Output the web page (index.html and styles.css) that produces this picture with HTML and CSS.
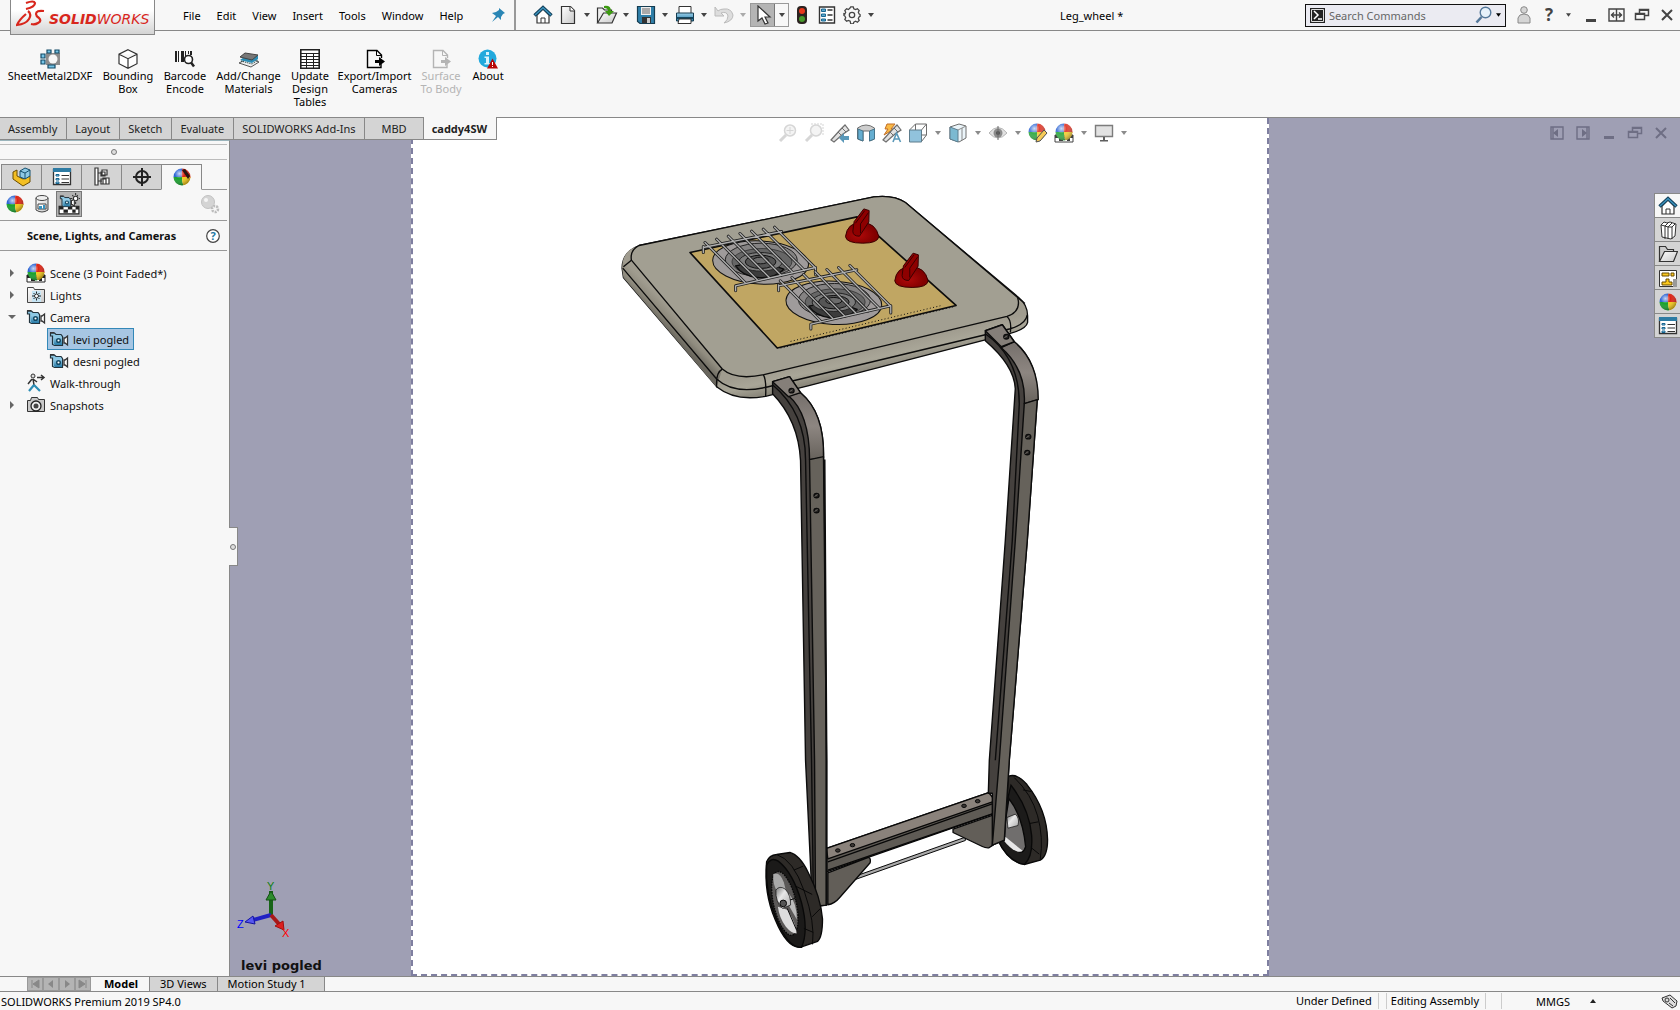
FILE: index.html
```html
<!DOCTYPE html>
<html lang="en">
<head>
<meta charset="utf-8">
<title>Leg_wheel * - SOLIDWORKS Premium 2019</title>
<link rel="stylesheet" href="styles.css">
</head>
<body>
<svg class="defs" width="0" height="0" aria-hidden="true">
  <defs>
    <radialGradient id="shine" cx=".35" cy=".3" r=".75"><stop offset="0" stop-color="#fff" stop-opacity=".75"/><stop offset=".4" stop-color="#fff" stop-opacity="0"/><stop offset="1" stop-color="#000" stop-opacity=".4"/></radialGradient>
    <linearGradient id="blue" x1="0" y1="0" x2="0" y2="1"><stop offset="0" stop-color="#9bd0ea"/><stop offset="1" stop-color="#2579a5"/></linearGradient>
    <linearGradient id="paper" x1="0" y1="0" x2="1" y2="1"><stop offset="0" stop-color="#fff"/><stop offset="1" stop-color="#c8c8c8"/></linearGradient>
    <clipPath id="ballclip"><circle cx="10" cy="10" r="8.500"/></clipPath>
  </defs>
  <symbol id="ball" viewBox="0 0 20 20"><g clip-path="url(#ballclip)"><path fill="#2a63d4" d="M0 0h11q-2 5-1 10H0z"/><path fill="#dc2414" d="M11 0h9v11H10q-1-6 1-11z"/><path fill="#18a02c" d="M0 10h10q0 6 2 10H0z"/><path fill="#f5c915" d="M10 10h10v10h-8q-2-4-2-10z"/><circle cx="10" cy="10" r="8.500" fill="url(#shine)"/></g></symbol>
  <symbol id="house" viewBox="0 0 20 20"><path d="M4 10v8h12v-8l-6-6z" fill="#fff" stroke="#333" stroke-width="1.2"/><path d="M8 18v-5h4v5" fill="none" stroke="#333"/><path d="M1.500 10.500 10 2.500l8.500 8" fill="none" stroke="#123f5a" stroke-width="3.400"/><path d="M2 10 10 2.700 18 10" fill="none" stroke="#3b93bd" stroke-width="1.400"/></symbol>
  <symbol id="list" viewBox="0 0 20 20"><path d="M1.500 2.500h17v15h-17z" fill="#fff" stroke="#333" stroke-width="1.300"/><path d="M1 1h18v4H1z" fill="#2d7ba3"/><path d="M4 7.500h3v1.500H4zm0 4h3v1.500H4zm0 3.500h3v1.500H4z" fill="#9bd0ea" stroke="#176490"/><path d="M9.500 8.500H17M9.500 12H17m-7.500 3.500H17" stroke="#333" stroke-width="1.200"/></symbol>
  <symbol id="camera" viewBox="0 0 20 20"><path d="M1.500 4v3h2v8.500l2 1h8V7.500l-1.500-2H7L5.500 4z" fill="#8cc8e4" stroke="#22333d" stroke-width="1.200"/><path d="M5 8h8v8H6l-1-1z" fill="url(#blue)"/><path d="M1 3h4l1 1.500H1z" fill="#333"/><circle cx="9.500" cy="11.500" r="1.800" fill="#fff" stroke="#134a66" stroke-width="1.500"/><path d="M15 9h1l2.500-2v9L16 14h-1z" fill="#fff" stroke="#333" stroke-width="1.300"/></symbol>
  <symbol id="checker" viewBox="0 0 20 20"><path d="M1 12h18v7H1z" fill="#fff" stroke="#222"/><path d="M1 12h4v3H1zm8 0h4v3H9zm7 0h3v3h-3zM5 15h4v3H5zm8 0h3v3h-3z" fill="#222"/></symbol>
  <symbol id="scene" viewBox="0 0 20 20"><use href="#checker"/><use href="#ball" y="-1"/></symbol>
  <symbol id="loupe" viewBox="0 0 20 20"><circle cx="12" cy="7.500" r="5.500" fill="#eee" stroke="currentColor" stroke-width="1.500"/><path d="m8 12-6 6" stroke="currentColor" stroke-width="3"/></symbol>
  <symbol id="caret" viewBox="0 0 6 4"><path d="M0 0h6L3 4z" fill="currentColor"/></symbol>
  <symbol id="exportdoc" viewBox="0 0 20 20"><path d="M11 18.500H2.500v-17h9.500l4.500 4.500v3M16 15v3.500h-5" fill="none" stroke="currentColor" stroke-width="1.400"/><path d="M11.500 1.500v5h5" fill="none" stroke="currentColor"/><path d="M10 11h4V8l6 4.500-6 4.500v-3h-4z" fill="currentColor"/></symbol>
  <symbol id="restore" viewBox="0 0 16 16"><path d="M5.500 6V2.500h9v6H11M1.500 6.500h9v6h-9z" fill="none" stroke="currentColor" stroke-width="1.500"/><path d="M5 2h10v2H5zM1 6h10v2H1z" fill="currentColor"/></symbol>
  <symbol id="cross" viewBox="0 0 16 16"><path d="m3 3 10 10M13 3 3 13" stroke="currentColor" stroke-width="2"/></symbol>
  <symbol id="tele" viewBox="0 0 20 20"><path d="m1 17 9-10 5-5 4 5-6 4L4 19z" fill="#ddd" stroke="#555" stroke-width="1.200"/><path d="m8 9 4 4m0-8 4 4" stroke="#555"/></symbol>
</svg>

<header class="titlebar">
  <div class="logo">
    <svg width="29" height="28" viewBox="0 0 29 28" fill="none" stroke="#d8261c" stroke-width="2.200"><path d="M10 3q8-3 9 0 0 4-9 6M12 11q4 3 1 8-3 5-12 6 2-5 9-11M28 11q-8-1-8 3 0 2 3 4 3 3-1 5-3 2-7 1"/></svg>
    <span class="wordmark"><b>SOLID</b>WORKS</span>
  </div>
  <nav class="menu">
    <button>File</button><button>Edit</button><button>View</button><button>Insert</button><button>Tools</button><button>Window</button><button>Help</button>
  </nav>
  <button class="pin" aria-label="Pin menu"><svg width="14" height="14" viewBox="0 0 14 14"><path d="m8 0 6 5-2 1-2 3v3L7 9l-6 5 4-6-4-3 4-1 3-2z" fill="#2a86b5"/></svg></button>
  <div class="quick">
    <button class="ico" aria-label="Home"><svg width="20" height="20"><use href="#house"/></svg></button>
    <button class="ico" aria-label="New"><svg width="20" height="20" viewBox="0 0 20 20"><path d="M3.500 1.500h9l4 4v13h-13z" fill="url(#paper)" stroke="#333" stroke-width="1.200"/><path d="M12 1.500V6h4.500" fill="#fff" stroke="#333"/></svg></button><button class="drop" aria-label="New options"><svg width="6" height="4"><use href="#caret"/></svg></button>
    <button class="ico" aria-label="Open"><svg width="22" height="20" viewBox="0 0 22 20"><path d="M1.500 18V3h5l2 2h7v4" fill="#eee" stroke="#333" stroke-width="1.200"/><path d="m1.500 18 6-10h13l-4.500 10z" fill="url(#paper)" stroke="#333" stroke-width="1.200"/><path d="M8 1q7-1 7 5h3l-5 5-4-5h3q0-3-4-3z" fill="#3c9a11"/></svg></button><button class="drop" aria-label="Open options"><svg width="6" height="4"><use href="#caret"/></svg></button>
    <button class="ico" aria-label="Save"><svg width="20" height="20" viewBox="0 0 20 20"><path d="M1.500 1.500h17v17H4l-2.500-2z" fill="#2f7fa9" stroke="#163c50" stroke-width="1.200"/><path d="M5 2h10v8H5z" fill="#eee"/><path d="M6 4h8M6 6h8M6 8h8" stroke="#666"/><path d="M6 12h9v6H6z" fill="#333"/><path d="M11 13h3v5h-3z" fill="#ccc"/></svg></button><button class="drop" aria-label="Save options"><svg width="6" height="4"><use href="#caret"/></svg></button>
    <button class="ico" aria-label="Print"><svg width="20" height="20" viewBox="0 0 20 20"><path d="M4 9V1.500h12V9" fill="#fff" stroke="#333"/><path d="M1.500 8h17v8h-17z" fill="url(#blue)" stroke="#163c50"/><path d="M1 12h18v2H1z" fill="#15465f"/><path d="M4 14h12v4.500H3z" fill="#fff" stroke="#333"/></svg></button><button class="drop" aria-label="Print options"><svg width="6" height="4"><use href="#caret"/></svg></button>
    <button class="ico" aria-label="Undo" disabled><svg width="20" height="20" viewBox="0 0 20 20"><path d="M1 2v9h9L7 8q6-2 7 3 0 4-4 7 9-2 9-8Q17 3 10 4q-4 0-6 2z" fill="#ddd" stroke="#bbb"/></svg></button><button class="drop" aria-label="Undo options" disabled><svg width="6" height="4"><use href="#caret"/></svg></button>
    <span class="select"><button class="ico" aria-label="Select"><svg width="20" height="20" viewBox="0 0 20 20"><path d="M5 1v15l4-3 3 6 3-1-3-6h5z" fill="#fff" stroke="#333" stroke-width="1.200"/></svg></button><button class="drop" aria-label="Select options"><svg width="6" height="4"><use href="#caret"/></svg></button></span>
    <button class="ico" aria-label="Rebuild"><svg width="20" height="20" viewBox="0 0 20 20"><rect x="5" y="1" width="10" height="18" rx="4" fill="#2b2220"/><circle cx="10" cy="6" r="3" fill="#e8381c"/><circle cx="10" cy="14" r="3" fill="#479a2a"/></svg></button>
    <button class="ico" aria-label="File properties"><svg width="18" height="20" viewBox="0 0 18 20"><path d="M1.500 2h15v16h-15z" fill="#fff" stroke="#333" stroke-width="1.400"/><path d="M3.500 4h4v2.500h-4zm0 5h4v2.500h-4zm0 5h4v2h-4z" fill="#5ba9cd" stroke="#176490"/><path d="M9.500 5h5m-5 5h5m-5 5h5" stroke="#333" stroke-width="1.400"/></svg></button>
    <button class="ico" aria-label="Options"><svg width="18" height="18" viewBox="0 0 20 20" fill="none" stroke="#444" stroke-width="1.400"><path d="m8 2 .6-1h2.800l.6 2 2 1 2-1 2 2-1 2 1 2 1 .500v2l-1 .500-1 2 1 2-2 2-2-1-2 1-.600 2H8.600L8 17l-2-1-2 1-2-2 1-2-1-2-1-.500v-2L2 9l1-2-1-2 2-2 2 1z"/><circle cx="10" cy="10" r="3"/></svg></button><button class="drop" aria-label="Options list"><svg width="6" height="4"><use href="#caret"/></svg></button>
  </div>
  <h1 class="doc">Leg_wheel *</h1>
  <label class="search">
    <svg width="15" height="15" viewBox="0 0 15 15"><path d="M0 0h15v15H0z" fill="#222"/><path d="M1.500 1.500h12v12h-12z" fill="none" stroke="#ddd"/><path d="m4 3 4 4-4 4m4 0h4" stroke="#fff" stroke-width="1.500" fill="none"/></svg>
    <input type="text" placeholder="Search Commands" aria-label="Search Commands">
    <svg width="17" height="18" viewBox="0 0 17 18"><circle cx="10.500" cy="6.500" r="5.300" fill="#e6f1fa" stroke="#54789a" stroke-width="1.400"/><path d="m6.500 11-5 5.500" stroke="#54789a" stroke-width="2.600"/></svg>
    <svg width="5" height="4"><use href="#caret"/></svg>
  </label>
  <div class="window">
    <button aria-label="User"><svg width="14" height="18" viewBox="0 0 14 18" fill="#d5d5d5" stroke="#888"><circle cx="7" cy="4" r="3.300"/><path d="M1 17v-5q1-4 6-4t6 4v5z"/></svg></button>
    <button class="help" aria-label="Help">?</button>
    <button class="drop" aria-label="Help options"><svg width="5" height="4"><use href="#caret"/></svg></button>
    <button aria-label="Minimize"><svg width="16" height="16"><path d="M3 12h10v3H3z" fill="#444"/></svg></button>
    <button aria-label="Span displays"><svg width="17" height="16" viewBox="0 0 17 16" fill="none" stroke="#444" stroke-width="1.400"><path d="M1 2h15v12H1zM8.500 2v12M3 8h11M6 5.500 3.500 8 6 10.500M11 5.500 13.500 8 11 10.500"/></svg></button>
    <button aria-label="Restore"><svg width="16" height="16"><use href="#restore"/></svg></button>
    <button aria-label="Close"><svg width="16" height="16"><use href="#cross"/></svg></button>
  </div>
</header>

<section class="ribbon" aria-label="caddy4SW commands">
  <button class="w84"><svg width="20" height="20" viewBox="0 0 20 20"><path d="M6 4h14v12H6z" fill="#8c8c8c"/><circle cx="13" cy="10" r="4.500" fill="#f7f7f7"/><path d="M1 5h4v4H1zm0 6h4v4H1zM7 1h4v3H7zm8 0h4v3h-4zM8 16h7v3H8z" fill="#76c4e6" stroke="#134a66" stroke-width="1.200"/></svg>SheetMetal2DXF</button>
  <button class="w52"><svg width="20" height="20" viewBox="0 0 20 20" fill="#fff" stroke="#333" stroke-width="1.200"><path d="m10 .700 9 4.500v9.500l-9 4.600-9-4.600V5.200zM1 5.200l9 4.500 9-4.500M10 9.700v9.600"/></svg>Bounding<br>Box</button>
  <button class="w42"><svg width="20" height="20" viewBox="0 0 20 20"><path d="M0 2h2v11H0zm3 0h1v11H3zm3 0h3v11H6zm4 0h1v5h-1zm3 0h1v3h-1zm2 0h2v4h-2z" fill="#222"/><circle cx="13.500" cy="10.500" r="4" fill="#fff" stroke="#222" stroke-width="1.600"/><path d="m16 13.500 3 4" stroke="#222" stroke-width="2.500"/></svg>Barcode<br>Encode</button>
  <button class="w65"><svg width="20" height="20" viewBox="0 0 20 20"><path d="m0 14 12 4 8-5-10-4z" fill="#eee" stroke="#555"/><path d="m1 11 12 3 6-4V7L8 6z" fill="#2c8db5"/><path d="m2 12 11 3 6-4" stroke="#133" fill="none" stroke-dasharray="1 1"/><path d="m1 8 5-4 13 2-6 5z" fill="#777" stroke="#444"/></svg>Add/Change<br>Materials</button>
  <button class="w38"><svg width="20" height="20" viewBox="0 0 20 20" fill="#fff" stroke="#222"><path stroke-width="1.600" d="M.800.800h18.400v18.400H.800z"/><path d="M1 4.500h18M1 7.500h18M1 10.500h18M1 13.500h18M1 16.500h18M6.500 4v15m7-15v15"/></svg>Update<br>Design<br>Tables</button>
  <button class="w71"><svg width="20" height="20"><use href="#exportdoc"/></svg>Export/Import<br>Cameras</button>
  <button class="w42" disabled><svg width="20" height="20"><use href="#exportdoc"/></svg>Surface<br>To Body</button>
  <button class="w32"><svg width="20" height="20" viewBox="0 0 20 20"><circle cx="9.500" cy="9.500" r="9" fill="#22a9dd"/><path d="M8 3h3v3H8zM6.500 7.500H11V14h1.500v1.500h-6V14H8V9H6.500z" fill="#d9f3fd"/><path d="m14.500 9.500 5.500 10H9z" fill="#b80707"/><path d="M14 13h1v3h-1zm0 4h1v1h-1z" fill="#fff"/></svg>About</button>
</section>

<main class="work">
  <section class="canvas" aria-label="Graphics area">
    <div class="frame">
      <svg class="model" viewBox="412 118 855 855" role="img" aria-label="Cooking cart assembly">
        <defs>
          <linearGradient id="rim" gradientUnits="userSpaceOnUse" x1="790" y1="500" x2="810" y2="590"><stop offset="0" stop-color="#a09c8f"/><stop offset=".35" stop-color="#a9a698"/><stop offset="1" stop-color="#747065"/></linearGradient>
          <linearGradient id="rimL" gradientUnits="userSpaceOnUse" x1="200" y1="400" x2="160" y2="440"><stop offset="0" stop-color="#a09c8f"/><stop offset=".5" stop-color="#8f8b7e"/><stop offset="1" stop-color="#69665d"/></linearGradient>
          <linearGradient id="bend" x1="0" y1="0" x2="0" y2="1"><stop offset="0" stop-color="#756f6b"/><stop offset=".5" stop-color="#8d8681"/><stop offset="1" stop-color="#67625c"/></linearGradient>
          <linearGradient id="steel" x1="0" y1="0" x2="1" y2="1"><stop offset="0" stop-color="#777"/><stop offset=".4" stop-color="#e8e8e8"/><stop offset="1" stop-color="#aaa"/></linearGradient>
          <radialGradient id="red" cx=".4" cy=".6"><stop offset="0" stop-color="#b00a0a"/><stop offset="1" stop-color="#820000"/></radialGradient>
          <g id="hob">
            <ellipse cx="0" cy="0" rx="144" ry="65" fill="#9f9b9b" stroke="#111" stroke-width="3" transform="rotate(3)"/>
            <ellipse cx="2" cy="-8" rx="108" ry="50" fill="#858383" stroke="#222" stroke-width="3"/>
            <ellipse cx="4" cy="-2" rx="90" ry="40" fill="#666" stroke="#222" stroke-width="2"/>
            <path d="m-75 10 75-15 70 25q-30 30-80 25-45-5-65-35z" fill="#3c3c3c"/>
            <ellipse cx="0" cy="-2" rx="65" ry="28" fill="#7c7c7c" stroke="#222" stroke-width="3"/>
            <ellipse cx="0" cy="-2" rx="46" ry="20" fill="#555" stroke="#111" stroke-width="3"/>
            <ellipse cx="0" cy="-6" rx="24" ry="10" fill="#6b6b6b" stroke="#111" stroke-width="3"/>
          </g>
          <path id="bars" d="M-172-48v18M-172-45l235-48M-75 85V70l240-55v22M-167-60-47 60M-132-70l122 122M-97-79 27 46M-62-87 62 39M-27-94 97 31M8-100 132 24M42-106 165 17"/>
          <g id="grate" fill="none" stroke-linecap="round"><use href="#bars" stroke="#202020" stroke-width="9"/><use href="#bars" stroke="#b0b0b0" stroke-width="4"/></g>
          <g id="knob" stroke="#3a0000" stroke-width="3"><path d="M-50 10q5-42 48-42t52 42q-2 20-48 20-50 0-52-20z" fill="url(#red)"/><path d="m-24-35 29-38 16 5-1 34-28 43q-20 0-20-15z" fill="#8e0000"/><path d="m-20-30 28-38M-5-28l24-34M-5-28v28" fill="none"/></g>
          <g id="hole"><ellipse rx="2.500" ry="2.200" fill="#2a2826"/><path d="m-2 1 3-2" stroke="#6d6964" stroke-width="1"/></g>
        </defs>
        <!-- right wheel -->
        <g transform="translate(740 760) scale(.33333)" stroke="#080808" stroke-width="4">
          <path d="M805 48q25-10 55 25 60 75 62 165 0 50-22 62l-48 13q-50-8-80-75z" fill="#2d2a27"/>
          <path d="M812 75q55 70 62 150 5 65-22 88-50-10-80-75z" fill="#1c1b1a"/>
          <path d="M822 52q52 50 70 115t8 130M868 190l26-5m-46-96 24 5M872 262l25 20" fill="none" stroke-width="3"/>
          <path d="M806 115q42 55 50 145-8 25-25 12-30-20-42-50z" fill="#706e6d"/>
          <path d="m795 230 52 42q-10 8-30-5-20-14-27-28z" fill="#e8e8e8" stroke="none"/>
          <path d="m800 172 25-10q14 12 8 34l-30 8z" fill="url(#steel)" stroke-width="2"/>
        </g>
        <!-- axle, crossbar and gussets -->
        <g transform="translate(740 760) scale(.33333)" stroke="#080808" stroke-width="4" stroke-linejoin="round">
          <path d="m345 348 330-117v10L345 358z" fill="#aaa" stroke-width="3"/>
          <path d="m258 265 487-168 20 27v35L258 335z" fill="#5f5b55"/>
          <path d="m258 265 487-168 20 25L262 296z" fill="#8a827b"/>
          <path d="m262 305 500-176M262 330l500-171" fill="none"/>
          <path d="m262 338 122-46q8 2 5 16l-92 105q-15 18-35 21z" fill="#625e58"/>
          <path d="m638 207 120-42v90l-12 8q-10 1-20-4l-88-42z" fill="#625e58"/>
          <g fill="#3a3633" stroke-width="3"><ellipse cx="292" cy="271" rx="7" ry="5"/><ellipse cx="336" cy="255" rx="7" ry="5"/><ellipse cx="671" cy="137" rx="7" ry="5"/><ellipse cx="712" cy="123" rx="7" ry="5"/></g>
        </g>
        <!-- table top -->
        <g transform="translate(610 180) scale(.33333)" stroke="#0c0c0c" stroke-width="4" stroke-linejoin="round">
          <path d="M34 262Q34 214 85 194L790 48q60-7 95 17l340 285q27 22 27 55v20q-4 20-52 33L595 615l-130 32q-92 16-145-27L38 290z" fill="url(#rim)"/>
          <path d="M34 262q0-48 41-64-20 15-13 42l273 325-17 55L38 290z" fill="url(#rimL)" stroke="none"/>
          <path d="M62 238q-5-30 23-44L790 48q60-7 95 17l337 285q12 42-32 57L460 582q-85 18-125-17z" fill="#a29f92"/>
          <path d="M36 262q5 5 282 333 52 48 152 24l730-175q46-14 51-42M335 565q-20 10-17 55M458 582q10 15 7 65M62 238l-24 20M1190 407q15 12 10 48M1222 350l22 18" fill="none"/>
          <path d="m238 215 502-107 297 266-537 128z" fill="#c0a663" stroke-width="5"/>
          <path d="m540 482 450-107M510 502l520-124" fill="none" stroke-width="3" stroke-dasharray="3 7"/>
          <use href="#hob" x="450" y="245"/><use href="#grate" x="450" y="245"/>
          <use href="#hob" x="670" y="366"/><use href="#grate" x="676" y="360"/>
          <use href="#knob" x="755" y="157"/><use href="#knob" x="903" y="290"/>
        </g>
        <!-- right leg -->
        <g stroke="#0c0c0c" stroke-width="1.400" stroke-linejoin="round">
          <path d="M985 330 1002 324 1014 341Q1038 361 1037 399L1027 540 1009 760 1004 840 992 845V793L988 793 989 760 1005 540 1015 388Q1014 365 985 340z" fill="#45413e"/>
          <path d="m1014 341q24 20 24 58l-14 4q2-34-23-56z" fill="url(#bend)"/>
          <path d="m985 330 17-6 12 17-13 5z" fill="#857f79"/>
          <path d="M1024 403 1037 399 1027 540 1009 760 1004 840 992 845 999 760 1015 540z" fill="#66625b"/>
          <path d="M985 333Q1019 357 1019 403L1012 540 995 760" fill="none"/>
          <use href="#hole" x="1006" y="336"/><use href="#hole" x="1028" y="436"/><use href="#hole" x="1027" y="452"/>
        </g>
        <!-- left leg -->
        <g stroke="#0c0c0c" stroke-width="1.400" stroke-linejoin="round">
          <path d="M772 381 789 376 800 392Q824 412 823 457L826 905 812 907 805 760 800 460Q798 420 772 393z" fill="#45413e"/>
          <path d="m800 392q24 20 23 65l-14 2q0-46-21-64z" fill="url(#bend)"/>
          <path d="m772 381 17-5 11 16-12 4z" fill="#857f79"/>
          <path d="M809 459 823 456 826 760V905L815 906 814 760z" fill="#66625b"/>
          <path d="M772 384Q805 412 805 459L811 760 813 906" fill="none"/>
          <path d="M824 459 826 760V905" fill="none" stroke-width="2"/>
          <use href="#hole" x="791" y="390"/><use href="#hole" x="816" y="495"/><use href="#hole" x="816" y="510"/>
        </g>
        <!-- left wheel -->
        <g transform="translate(740 760) scale(.33333)" stroke="#080808" stroke-width="4">
          <path d="M78 305q8-20 30-22l40-6q30 8 55 60 38 75 43 140 0 55-15 67l-52 18q-40 2-75-83-35-80-26-174z" fill="#2d2a27"/>
          <path d="M78 315q12-26 35-12 45 35 70 125 22 85 0 134-40 2-75-83-35-80-30-164z" fill="#1b1a19"/>
          <path d="M108 283q50 15 83 110t25 160M160 330l28-12M165 378l50 25M215 470l25-25M190 505l28 12" fill="none" stroke-width="3"/>
          <ellipse cx="133" cy="430" rx="34" ry="98" transform="rotate(-13 133 430)" fill="#5b5958" stroke-dasharray="5 3"/>
          <path d="M98 342q20-8 32 25l8 33-28-5q-14-22-12-53z" fill="#aaa" stroke="none"/>
          <path d="m112 440 30 10q28 50 26 70-16 0-32-20-20-26-24-60z" fill="#ddd" stroke="none"/>
          <path d="m145 400q24 30 24 78l-22-38z" fill="#bbb" stroke="none"/>
          <path d="m106 390q10-15 28-3 18 20 16 48l-24 10q-22-20-20-55z" fill="url(#steel)" stroke-width="2"/>
          <circle cx="128" cy="430" r="10" fill="#555" stroke-width="3"/><path d="m140 445 28 65m-20-90 15-5" stroke-width="3"/>
        </g>
      </svg>
    </div>
  </section>

  <nav class="tabs" aria-label="CommandManager">
    <button>Assembly</button><button>Layout</button><button>Sketch</button><button>Evaluate</button><button>SOLIDWORKS Add-Ins</button><button class="wide">MBD</button><button class="on">caddy4SW</button>
  </nav>

  <aside class="panel">
    <div class="grip"><i class="dot"></i></div>
    <div class="ptabs">
      <button aria-label="FeatureManager"><svg width="20" height="20" viewBox="0 0 20 20"><path d="m1 5 4-2v6l6 3 7-3v6l-7 4-10-7z" fill="#f3bf24" stroke="#6b4d00"/><path d="m8 4 5-3 5 2v6l-5 3-5-2z" fill="#8fc9e6" stroke="#15506e"/><path d="m8 4 5 2 5-3M13 6v6" stroke="#15506e" fill="none"/></svg></button>
      <button aria-label="PropertyManager"><svg width="20" height="20"><use href="#list"/></svg></button>
      <button aria-label="ConfigurationManager"><svg width="20" height="20" viewBox="0 0 20 20" fill="#fff" stroke="#333" stroke-width="1.200"><path d="M3 1h3v17H3zM6 6h4M6 14h4M10 3h5v5h-5zM11 11h6v6h-6zM9 5h4v4H9zM9 12h5v5H9z"/></svg></button>
      <button aria-label="DimXpertManager"><svg width="20" height="20" viewBox="0 0 20 20" fill="none" stroke="#222" stroke-width="2"><circle cx="10" cy="10" r="6"/><path d="M10 1v18M1 10h18"/></svg></button>
      <button class="on" aria-label="DisplayManager"><svg width="20" height="20" viewBox="0 0 20 20"><use href="#ball"/><path d="m10 3 3-1 5 7-2 3z" fill="#2a1512"/></svg></button>
    </div>
    <div class="ptools">
      <button aria-label="View appearances"><svg width="20" height="20"><use href="#ball"/></svg></button>
      <button aria-label="View decals"><svg width="20" height="20" viewBox="0 0 20 20"><path d="M4 4v12q6 4 12 0V4z" fill="url(#paper)" stroke="#444"/><ellipse cx="10" cy="4" rx="6" ry="2.500" fill="#eee" stroke="#444"/><path d="M6 10h8v5H6z" fill="#fff" stroke="#444"/><path d="M7 12h3v3H7zm4-1h2v4h-2z" fill="#3892be"/></svg></button>
      <button class="on" aria-label="View scene, lights and cameras"><svg width="22" height="22" viewBox="0 0 20 20"><use href="#checker"/><use href="#camera" x="1" y="-1" width="15" height="17"/><circle cx="16" cy="5" r="2" fill="#fff" stroke="#333"/><path d="M16 0v2m0 6v2m-5-5h2m6 0h1M13 2l1 1m4-1-1 1" stroke="#333"/></svg></button>
      <button class="end" aria-label="Settings" disabled><svg width="20" height="20" viewBox="0 0 20 20"><circle cx="8" cy="8" r="6.500" fill="#d4d4d4" stroke="#c2c2c2"/><circle cx="6" cy="6" r="2" fill="#f5f5f5"/><circle cx="15" cy="15" r="3" fill="none" stroke="#bbb" stroke-width="2.500" stroke-dasharray="2 1"/></svg></button>
    </div>
    <div class="ptitle"><h2>Scene, Lights, and Cameras</h2><button aria-label="Help"><svg width="14" height="14" viewBox="0 0 14 14"><circle cx="7" cy="7" r="6.300" fill="#fff" stroke="#444" stroke-width="1.200"/><text x="7" y="11" class="q" text-anchor="middle">?</text></svg></button></div>
    <ul class="tree">
      <li><i class="arrow"></i><svg width="20" height="20"><use href="#scene"/></svg><span>Scene (3 Point Faded*)</span></li>
      <li><i class="arrow"></i><svg width="20" height="20" viewBox="0 0 20 20"><path d="M1.500 17.500v-15h6l1 2h10v13z" fill="url(#paper)" stroke="#444"/><path d="M6 6h9v11H6z" fill="#c6e5f5"/><circle cx="10.500" cy="11" r="2" fill="#fff" stroke="#222"/><path d="M10.500 6.500v2m0 5v2m-4.500-4.500h2m5 0h2m-7.500-3 1 1m4 4 1 1m0-6-1 1m-4 4-1 1" stroke="#222"/></svg><span>Lights</span></li>
      <li><i class="arrow open"></i><svg width="20" height="20"><use href="#camera"/></svg><span>Camera</span></li>
      <li class="child"><button class="picked"><svg width="20" height="20"><use href="#camera"/></svg>levi pogled</button></li>
      <li class="child"><button><svg width="20" height="20"><use href="#camera"/></svg>desni pogled</button></li>
      <li><i class="arrow none"></i><svg width="20" height="20" viewBox="0 0 20 20" fill="none" stroke="#333" stroke-width="1.500"><circle cx="7" cy="3" r="2" fill="#ddd" stroke-width="1"/><path d="m6 6-4 5m5-5 1 6M7 6l4 3M11 4.500h6M15 2l3 2.500L15 7"/><path d="m8 12-5 6m5-6 6 6" stroke="#2c8db5" stroke-width="2.200"/></svg><span>Walk-through</span></li>
      <li><i class="arrow"></i><svg width="20" height="20" viewBox="0 0 20 20"><path d="M1.500 5.500h3l1-3h6l1 2h6v12h-17z" fill="#c9c9c9" stroke="#333"/><circle cx="10" cy="11" r="5" fill="#eee" stroke="#222" stroke-width="1.300"/><circle cx="10" cy="11" r="2.500" fill="#444"/></svg><span>Snapshots</span></li>
    </ul>
    <button class="handle" aria-label="Collapse panel"><i class="dot"></i></button>
  </aside>

  <div class="hud" role="toolbar" aria-label="View">
    <button class="faint" aria-label="Zoom to fit"><svg width="20" height="20" viewBox="0 0 20 20"><use href="#loupe"/><path d="M12 4v7M8.500 7.500h7" stroke="currentColor"/></svg></button>
    <button class="faint" aria-label="Zoom to area"><svg width="20" height="20" viewBox="0 0 20 20"><path d="M7 1h12v12" fill="none" stroke="currentColor" stroke-dasharray="2 1"/><use href="#loupe"/></svg></button>
    <button aria-label="Previous view"><svg width="20" height="20" viewBox="0 0 20 20"><use href="#tele"/><path d="M19 13v4h-5v3l-5-5 5-5v3z" fill="#3d87ad"/></svg></button>
    <button aria-label="Section view"><svg width="20" height="20" viewBox="0 0 20 20"><path d="M1.500 5Q10-1 18.500 5v11l-5 2V8H7v10l-5.500-2z" fill="#c6c6c6" stroke="#555"/><path d="m2 6 5 2v10l-5-2zM13.500 8l5-2v10l-5 2z" fill="#4ba0ca" stroke="#255d78"/></svg></button>
    <button aria-label="Dynamic annotation"><svg width="20" height="20" viewBox="0 0 20 20"><path d="M5 1h8L9 6h3L2 12l4-6H3z" fill="#f9ae26" stroke="#b85500"/><use href="#tele"/><path d="m11 19 3.500-9 4 9m-6-3h5" fill="none" stroke="#3d87ad" stroke-width="1.600"/></svg></button>
    <button aria-label="View orientation"><svg width="20" height="20" viewBox="0 0 20 20"><path d="m1.500 7 6-6h11v11l-5 6.500h-12z" fill="#fff" stroke="#555"/><path d="M1.500 7h12v12h-12z" fill="#7eb8d6" stroke="#42677a"/><path d="m13.500 7 5-6m-11 0v6m6 5h5" stroke="#555"/></svg></button><button class="drop" aria-label="Orientation list"><svg width="6" height="4"><use href="#caret"/></svg></button>
    <button aria-label="Display style"><svg width="20" height="20" viewBox="0 0 20 20"><path d="m2 4 9-3 7 2v12l-7 4-9-3z" fill="#e8f4fa" stroke="#555"/><path d="m2 4 8 3v12l-8-3z" fill="#64adc9" stroke="#42677a"/><path d="m10 7 8-4M14 5v12" stroke="#777"/></svg></button><button class="drop" aria-label="Display list"><svg width="6" height="4"><use href="#caret"/></svg></button>
    <button aria-label="Hide or show items"><svg width="20" height="20" viewBox="0 0 20 20"><path d="M1 10q9-11 18 0-9 10-18 0z" fill="#ddd" stroke="#aaa"/><circle cx="10" cy="10" r="4.500" fill="#777"/><circle cx="10" cy="10" r="2" fill="#333"/><path d="M10 3v14" stroke="#555"/></svg></button><button class="drop" aria-label="Item list"><svg width="6" height="4"><use href="#caret"/></svg></button>
    <button aria-label="Edit appearance"><svg width="20" height="20" viewBox="0 0 20 20"><use href="#ball" x="-1" y="-1"/><path d="m8 19 1-4 7-8 3 3-7 8z" fill="#f5c33b" stroke="#333"/></svg></button>
    <button aria-label="Apply scene"><svg width="20" height="20"><use href="#scene"/></svg></button><button class="drop" aria-label="Scene list"><svg width="6" height="4"><use href="#caret"/></svg></button>
    <button aria-label="View settings"><svg width="20" height="20" viewBox="0 0 20 20"><path d="M1.500 2.500h17v11h-17z" fill="#ddd" stroke="#666" stroke-width="1.400"/><path d="M9 14h2v3h3v1.500H6V17h3z" fill="#444"/></svg></button><button class="drop" aria-label="Settings list"><svg width="6" height="4"><use href="#caret"/></svg></button>
  </div>

  <div class="docwin">
    <button aria-label="Previous pane"><svg width="16" height="16" viewBox="0 0 16 16"><path d="M2 2h12v12H2zM4 2v12" fill="none" stroke="currentColor" stroke-width="1.400"/><path d="M9 4v8L4 8z" fill="currentColor"/></svg></button>
    <button aria-label="Next pane"><svg width="16" height="16" viewBox="0 0 16 16"><path d="M2 2h12v12H2zM12 2v12" fill="none" stroke="currentColor" stroke-width="1.400"/><path d="M7 4v8l5-4z" fill="currentColor"/></svg></button>
    <button aria-label="Minimize document"><svg width="16" height="16"><path d="M3 11h10v3H3z" fill="currentColor"/></svg></button>
    <button aria-label="Restore document"><svg width="16" height="16"><use href="#restore"/></svg></button>
    <button aria-label="Close document"><svg width="16" height="16"><use href="#cross"/></svg></button>
  </div>

  <nav class="task" aria-label="Task pane">
    <button class="on" aria-label="Resources"><svg width="20" height="20"><use href="#house"/></svg></button>
    <button aria-label="Design library"><svg width="20" height="20" viewBox="0 0 20 20" fill="#fff" stroke="#333"><path d="m3 5 3-3 3 1 3-1 3 1 3 1-1 12-4 3-9-2zM3 5l4 1v13M7 6l3-3M7 6l3 1v12m0-12 4-4m-4 4 4 0v12m0-12 3-3"/></svg></button>
    <button aria-label="File explorer"><svg width="20" height="20" viewBox="0 0 20 20"><path d="M1.500 17.500v-15h6l2 3h6V8" fill="#ccc" stroke="#333" stroke-width="1.200"/><path d="m1.500 17.500 5-10h13l-4 10z" fill="url(#paper)" stroke="#333" stroke-width="1.200"/></svg></button>
    <button aria-label="View palette"><svg width="20" height="20" viewBox="0 0 20 20"><path d="M1.500 2.500h17v16h-17z" fill="#fff" stroke="#333"/><path d="M4 5h7v3H4zm9 0h3v3h-3zM8 11h3v3h3v3H4v-3h4z" fill="#fbc91f" stroke="#6b4d00"/><path d="M15 11h4v8h-4z" fill="#999"/></svg></button>
    <button aria-label="Appearances"><svg width="20" height="20"><use href="#ball"/></svg></button>
    <button aria-label="Custom properties"><svg width="20" height="20"><use href="#list"/></svg></button>
  </nav>

  <div class="corner">
    <svg width="56" height="60" viewBox="236 882 56 60" role="img" aria-label="Axis triad">
      <path d="M271 918v-24" stroke="#176417" stroke-width="4"/><path d="m271 894-5 9h10z" fill="#2d8c2d" stroke="#145014"/>
      <path d="m271 918-18 5" stroke="#2020c4" stroke-width="4"/><path d="m245 925 8-6 2 8z" fill="#5858f0" stroke="#1414a0"/>
      <path d="m271 918 8 9" stroke="#a81818" stroke-width="4"/><path d="m284 933-9-4 8-5z" fill="#dc2020" stroke="#a01010"/>
      <g class="axis"><text x="267" y="893" fill="#108010">Y</text><text x="237" y="931" fill="#00f">Z</text><text x="282" y="940" fill="#f00">X</text></g>
    </svg>
    <p>levi pogled</p>
  </div>
</main>

<nav class="sheets" aria-label="Document tabs">
  <div class="steps">
    <button aria-label="First"><svg width="10" height="10"><path d="M2 1v8M9 1v8L3 5z" fill="#888" stroke="#888"/></svg></button>
    <button aria-label="Previous"><svg width="10" height="10"><path d="M7 1v8L2 5z" fill="#888"/></svg></button>
    <button aria-label="Next"><svg width="10" height="10"><path d="M3 1v8l5-4z" fill="#888"/></svg></button>
    <button aria-label="Last"><svg width="10" height="10"><path d="M8 1v8M1 1v8l6-4z" fill="#888" stroke="#888"/></svg></button>
  </div>
  <button class="on">Model</button><button>3D Views</button><button class="last">Motion Study 1</button>
</nav>

<footer class="status">
  <span class="product">SOLIDWORKS Premium 2019 SP4.0</span>
  <span class="cell">Under Defined</span><span class="cell gap"></span><span class="cell">Editing Assembly</span><span class="cell blank"></span>
  <button class="units">MMGS <svg width="6" height="4" viewBox="0 0 6 4"><path d="M0 4h6L3 0z" fill="#222"/></svg></button>
  <button class="tag" aria-label="Tags"><svg width="17" height="15" viewBox="0 0 17 15" fill="#ddd" stroke="#333"><path d="m1 4 8-3 7 6-1 5-4 2-9-7z"/><circle cx="6" cy="6" r="2"/><path d="m9 4 5 5m-6 0 4 3"/></svg></button>
</footer>
</body>
</html>
```

FILE: styles.css
```css
* { box-sizing: border-box; }
body {
  margin: 0;
  min-height: 100vh;
  display: flex;
  flex-direction: column;
  background: #f7f7f7;
  color: #000;
  font: 11px/13px "Noto Sans", "Open Sans", sans-serif;
}
button {
  margin: 0;
  padding: 0;
  border: 0;
  background: none;
  color: inherit;
  font: inherit;
  display: flex;
  align-items: center;
  justify-content: center;
}
svg { display: block; flex: none; }
.defs { position: absolute; }

/* title bar */
.titlebar {
  height: 31px;
  display: flex;
  align-items: center;
  border-bottom: 1px solid #888;
}
.logo {
  align-self: flex-start;
  width: 145px;
  height: 35px;
  margin-left: 10px;
  padding-left: 5px;
  display: flex;
  align-items: flex-start;
  border: 1px solid #888;
  border-top: 0;
  background: linear-gradient(#fff 30%, #d4d4d4);
  color: #d8261c;
  position: relative;
  z-index: 2;
}
.wordmark { font: italic 14px/16px "DejaVu Sans", sans-serif; padding-top: 11px; margin-left: 4px; }
.menu { display: flex; gap: 16px; margin-left: 28px; }
.pin { width: 14px; margin-left: 28px; }
.quick {
  align-self: stretch;
  display: flex;
  align-items: center;
  margin-left: 9px;
  padding-left: 14px;
  border-left: 2px solid #999;
}
.ico { width: 25px; height: 24px; }
.drop { width: 14px; height: 24px; color: #444; }
.drop:disabled { color: #aaa; }
.select { display: flex; outline: 1px solid #999; outline-offset: -1px; }
.select .ico { background: #b4b4b4; border: 1px solid #777; }
.doc { flex: 1; margin: 0; text-align: center; font: inherit; }
.search {
  width: 201px;
  height: 23px;
  padding: 0 4px;
  display: flex;
  align-items: center;
  gap: 4px;
  border: 1px solid #111;
  background: #ebebf2;
}
.search input {
  flex: 1;
  min-width: 0;
  padding: 0;
  border: 0;
  background: none;
  font: inherit;
}
.search input::placeholder { color: #666; opacity: 1; }
.window { display: flex; align-items: center; gap: 9px; margin: 0 5px 0 11px; color: #444; }
.window .drop { width: 12px; }
.help { margin-left: 5px; font: bold 17px/20px "Open Sans", sans-serif; }

/* ribbon */
.ribbon {
  height: 87px;
  padding: 18px 8px 0;
  display: flex;
  align-items: flex-start;
  gap: 10px;
  border-bottom: 1px solid #888;
}
.ribbon button { flex-direction: column; white-space: nowrap; }
.ribbon button:disabled { color: #b4b4b4; }
.w84 { width: 84px; }
.w71 { width: 71px; }
.w65 { width: 65px; }
.w52 { width: 52px; }
.w42 { width: 42px; }
.w38 { width: 38px; }
.w32 { width: 32px; }

/* workspace */
.work {
  flex: 1;
  display: grid;
  grid-template: 22px minmax(0, 1fr) / 230px minmax(0, 1fr);
  min-height: 0;
  background: #9f9fb4;
}
.canvas { grid-area: 1 / 1 / 3 / 3; display: flex; justify-content: center; }
.frame { aspect-ratio: 1; height: calc(100vh - 152px); background: #fff; border: 2px dashed #7f7fa0; border-top: 0; }
.model { width: 100%; height: 100%; }
.tabs { grid-area: 1 / 1 / 2 / 3; display: flex; justify-self: start; z-index: 2; }
.tabs button {
  padding: 0 9px 0 8px;
  background: #d4d4d4;
  border-right: 1px solid #888;
  border-bottom: 1px solid #888;
  color: #222;
}
.tabs .wide { padding: 0 16px; }
.tabs .on { background: #f7f7f7; font-weight: bold; margin-top: -1px; }
.panel {
  grid-area: 2 / 1;
  position: relative;
  background: #f7f7f7;
  border-right: 1px solid #888;
  border-top: 1px solid #9ab4bb;
}
.grip {
  height: 16px;
  margin: 3px 2px 0 0;
  display: flex;
  align-items: center;
  justify-content: center;
  border: solid #bbb;
  border-width: 1px 0;
}
.dot { width: 6px; height: 6px; border: 1px solid #777; border-radius: 50%; background: #ddd; }
.ptabs { display: flex; height: 30px; padding: 4px 0 0 1px; margin-right: 2px; border-bottom: 1px solid #999; }
.ptabs button { width: 40px; height: 26px; background: #d4d4d4; border: 1px solid #888; border-right-width: 0; }
.ptabs .on { background: #f7f7f7; width: 41px; border-right-width: 1px; border-bottom-color: #f7f7f7; }
.ptools { display: flex; align-items: center; height: 31px; gap: 1px; padding: 0 4px 2px 2px; margin-right: 2px; border-bottom: 1px solid #999; }
.ptools button { width: 26px; height: 26px; }
.ptools .on { background: #b4b4b4; border: 1px solid #777; }
.ptools .end { margin-left: auto; }
.ptitle { display: flex; align-items: center; height: 30px; margin-right: 2px; padding: 0 7px 0 27px; border-bottom: 1px solid #999; }
.ptitle h2 { flex: 1; margin: 0; font: bold 11px/13px "Noto Sans", sans-serif; color: #111; white-space: nowrap; }
.q { font: bold 11px "Noto Sans", sans-serif; fill: #2478a3; }
.tree { list-style: none; margin: 0; padding: 11px 0 0 8px; }
.tree li { display: flex; align-items: center; height: 22px; gap: 4px; color: #111; }
.tree .child { padding-left: 39px; }
.tree button { height: 22px; padding: 0 4px 0 1px; gap: 4px; border: 1px solid transparent; white-space: nowrap; }
.tree .picked { background: #a7c6e3; border-color: #3388b8; }
.arrow { width: 14px; height: 10px; background: #666; clip-path: polygon(2px 1px, 6px 5px, 2px 9px); }
.arrow.open { clip-path: polygon(0 3px, 8px 3px, 4px 7px); }
.arrow.none { visibility: hidden; }
.handle {
  position: absolute;
  right: -9px;
  top: 386px;
  width: 9px;
  height: 39px;
  background: #f7f7f7;
  border: 1px solid #888;
  border-left: 0;
}
.hud { grid-area: 1 / 2 / 3 / 3; place-self: start center; display: flex; padding: 5px 4px 0 0; color: #777; z-index: 1; }
.hud button { width: 26px; height: 20px; opacity: .85; }
.hud .drop { width: 14px; color: #777; }
.hud .faint { color: #bbb; opacity: .6; }
.docwin { grid-area: 1 / 2 / 3 / 3; place-self: start end; display: flex; gap: 10px; padding: 7px 11px 0 0; color: #6e6e84; }
.task { grid-area: 2 / 2; place-self: start end; margin-top: 53px; border: 1px solid #888; border-right: 0; }
.task button { width: 25px; height: 24px; background: #d4d4d4; }
.task button + button { border-top: 1px solid #888; }
.task .on { background: #f7f7f7; height: 23px; }
.corner { grid-area: 2 / 2; place-self: end start; padding-left: 6px; }
.corner p { margin: 18px 0 1px 5px; font: bold 13px/18px "DejaVu Sans", sans-serif; color: #111; }
.axis { font: 11px "Liberation Sans", sans-serif; }

/* bottom tabs and status bar */
.sheets { height: 16px; display: flex; border: solid #888; border-width: 1px 0; }
.steps { display: flex; width: 93px; padding-left: 27px; }
.steps button { width: 16px; background: #b4b4b4; border: 1px solid #999; }
.sheets > button { padding: 0 10px 2px; background: #d4d4d4; border-right: 1px solid #888; white-space: nowrap; }
.sheets > .on { padding: 0 11px 2px; background: #f7f7f7; font-weight: bold; }
.sheets > .last { padding-right: 18px; }
.status { height: 18px; display: flex; align-items: center; padding: 0 2px 0 1px; white-space: nowrap; }
.product { flex: 1; }
.cell { height: 16px; line-height: 16px; padding: 0 6px 0 4px; border-right: 1px solid #ccc; }
.gap { width: 8px; padding: 0; }
.blank { width: 16px; }
.units { width: 146px; gap: 20px; padding-right: 18px; }
.tag { width: 17px; margin-left: 13px; }
```
